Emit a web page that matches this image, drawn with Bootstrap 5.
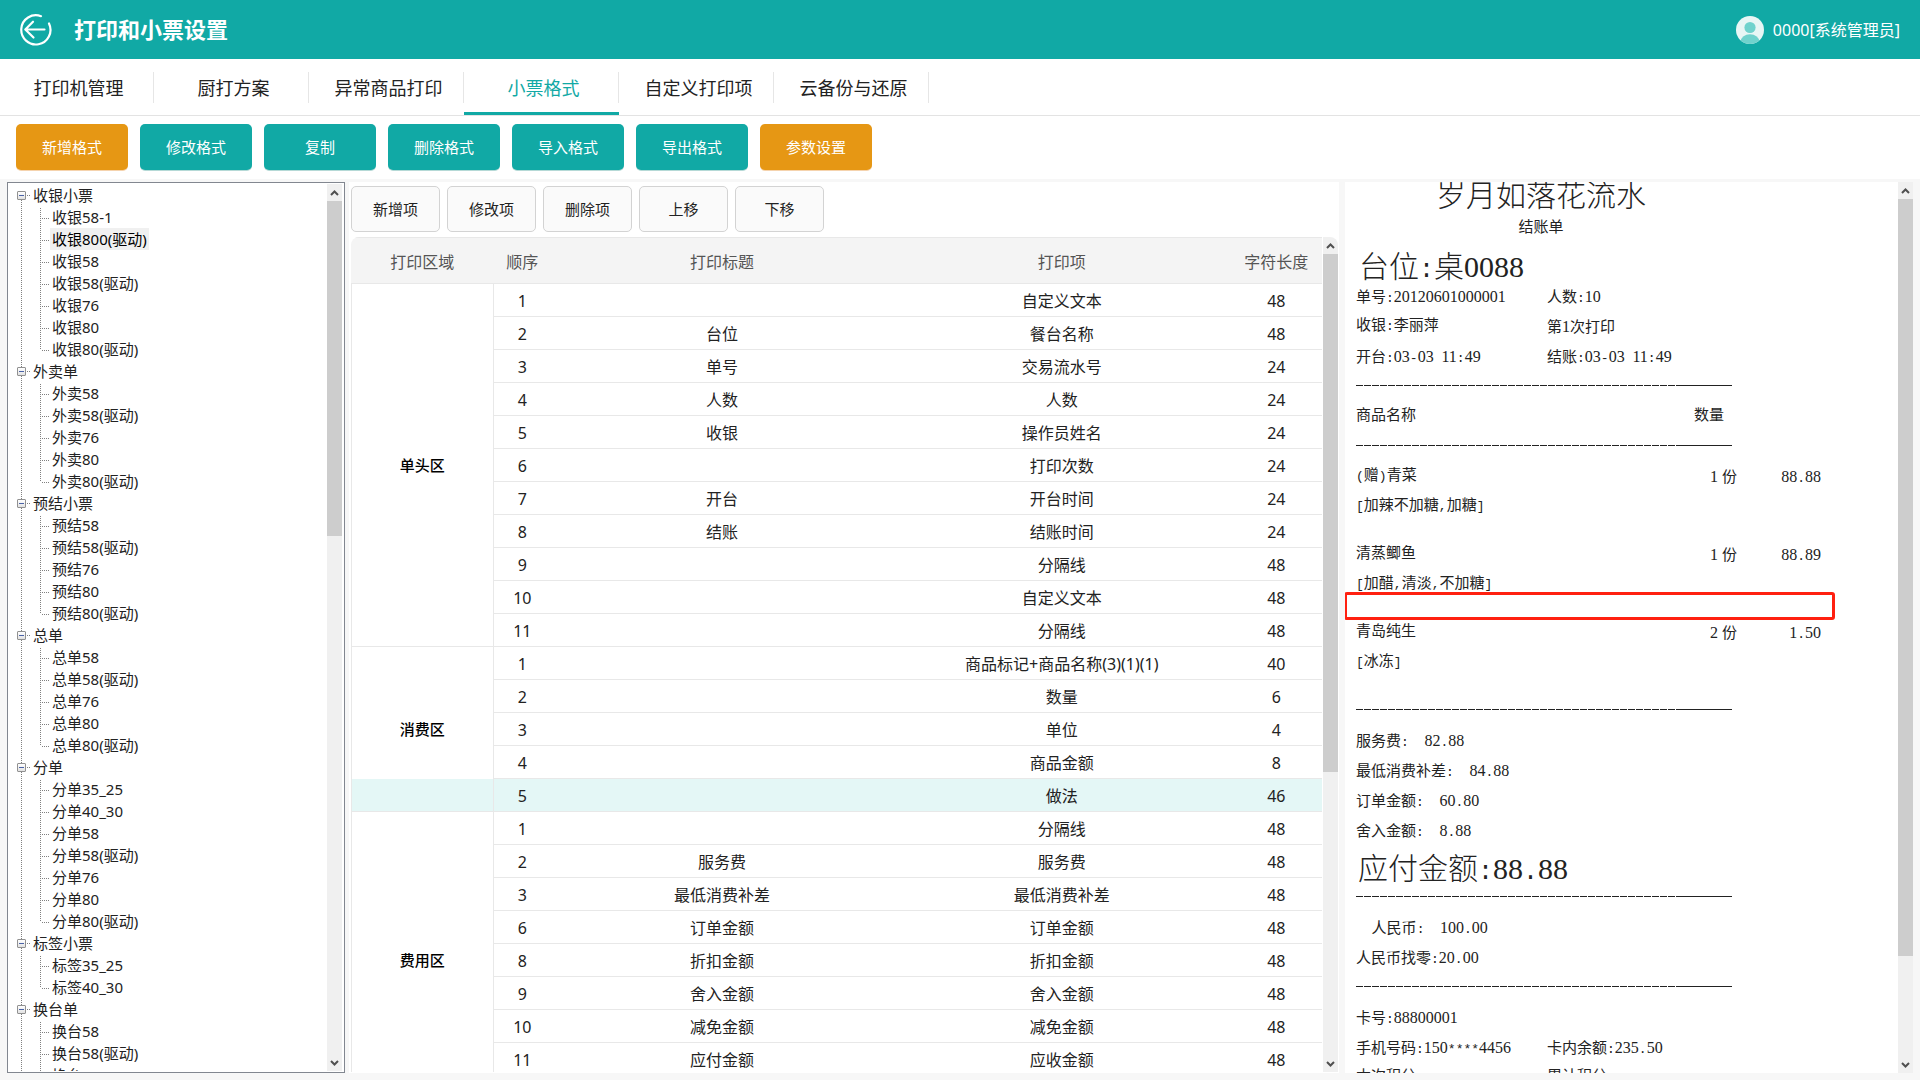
<!DOCTYPE html>
<html lang="zh-CN">
<head>
<meta charset="utf-8">
<meta name="viewport" content="width=device-width, initial-scale=1">
<title>打印和小票设置</title>
<link href="https://cdn.jsdelivr.net/npm/bootstrap@5.3.0/dist/css/bootstrap.min.css" rel="stylesheet">
<style>
  :root { --teal: #11a9a5; --amber: #e69714; --line: #e8e8e8; }
  body { font-family: "Noto Sans", "Noto Sans CJK SC", sans-serif; font-size: 16px; color: #222; background: #f7f7f7; }
  a { color: inherit; text-decoration: none; }

  .topbar { height: 59px; background: var(--teal); padding: 0 20px 0 17px; }
  .topbar h1 { font-size: 22px; font-weight: 700; line-height: 32px; margin-left: 21px; }
  .title-group { padding-bottom: 2px; }
  .back-btn { width: 36px; height: 36px; }
  .user-link { gap: 9px; }

  .tabs-bar { height: 57px; border-bottom: 1px solid #e3e3e3; margin-left: -1px; }
  .tabs-bar .nav-link { width: 155px; height: 56px; padding: 0; font-size: 18px; color: #222; border-radius: 0; border-bottom: 3px solid transparent; border-top: 3px solid transparent; }
  .tabs-bar .nav-link span { height: 31px; line-height: 32px; padding-left: 5px; border-right: 1px solid #e6e6e6; }
  .tabs-bar .nav-link.active { color: var(--teal); border-bottom-color: var(--teal); }

  .actions { padding: 8px 16px; gap: 12px; height: 63px; }
  .btn-action { width: 112px; height: 46px; padding: 0; border: 0; border-radius: 5px; font-size: 15px; color: #fff; background: var(--teal); box-shadow: 0 1px 0 #b5d9d6; }
  .btn-action:hover { background: #0e9793; color: #fff; }
  .btn-action.amber { background: var(--amber); box-shadow: 0 1px 0 #f5d3ae; }
  .btn-action.amber:hover { background: #cf8610; }

  .workspace { padding: 3px 7px 7px; }

  .scroll-rail { width: 15px; background: #f0f0f0; }
  .scroll-rail svg { height: 17px; width: 100%; }
  .scroll-thumb { background: #cdcdcd; }

  .tree-panel { width: 338px; border: 1px solid #828790; padding: 1px 2px 1px 0; margin-right: 4px; font-size: 15px; }
  .tree-panel ul { list-style: none; margin: 0; padding: 0; }
  .tree-panel li { line-height: 22px; }
  .branch { background: repeating-linear-gradient(#808080 0 1px, #fff 1px 2px) 13px 0 / 1px 100% no-repeat; }
  .branch:first-child { background-position: 13px 12px; }
  .branch-head { height: 22px; padding-left: 9px; }
  .twig { width: 9px; height: 9px; padding: 0; border: 1px solid #919191; border-radius: 1px; background: linear-gradient(#4b63a7, #4b63a7) center / 5px 1px no-repeat, linear-gradient(#fff, #e2e2e2); }
  .stub { width: 4px; height: 1px; margin: 0 2px 0 1px; background: repeating-linear-gradient(90deg, #808080 0 1px, transparent 1px 2px); }
  .tree-panel .leaves { background: repeating-linear-gradient(#808080 0 1px, #fff 1px 2px) 32px 2px / 1px calc(100% - 13px) no-repeat; }
  .leaves li { height: 22px; padding-left: 42px; background: repeating-linear-gradient(90deg, #808080 0 1px, transparent 1px 2px) 34px 12px / 7px 1px no-repeat; }
  .leaves a { display: inline-block; height: 22px; padding: 0 2px; }
  .leaves a.picked { background: #f0f0f0; color: #000; }

  .format-panel { flex: 987 1 3px; margin-right: 6px; padding: 4px 1px 1px 2px; min-width: 0; }
  .item-tools { gap: 7px; margin-bottom: 5px; }
  .btn-item { width: 89px; height: 46px; padding: 0; font-size: 15px; color: #222; background: #fafafa; border: 1px solid #d3d3d3; border-radius: 5px; }
  .btn-item:hover { background: #f0f0f0; }
  .grid-wrap { border-radius: 8px 8px 0 0; }
  .grid-body { padding-right: 1px; }
  .fmt-table { table-layout: fixed; border-collapse: separate; border-spacing: 0; --bs-table-color: #222; --bs-table-bg: transparent; color: #222; }
  .fmt-table > :not(caption) > * > * { padding: 2px 0 0; height: 33px; line-height: 24px; border-width: 0 0 1px; border-color: var(--line); border-style: solid; }
  .fmt-table > thead > tr > th { height: 47px; vertical-align: middle; font-weight: 400; color: #555; background: #f4f4f4; border-top-width: 1px; }
  .fmt-table > tbody > tr > .zone { padding-top: 0; font-size: 15px; font-weight: 500; color: #000; border-width: 0 1px 1px; }
  .fmt-table > tbody > tr > .zone.lit { background: linear-gradient(to top, #e4f7f6 32px, transparent 32px); }
  .fmt-table > tbody > tr.current > td:not(.zone) { background: #e4f7f6; }

  .receipt-panel { flex: 568 1 0; min-width: 0; }
  .receipt { padding-left: 11px; font-family: "Liberation Mono", "Noto Sans CJK SC", monospace; font-size: 15px; color: #222; }
  .receipt .rline { height: 30px; line-height: 32px; white-space: pre; }
  .receipt .hw { font-size: 13px; }
  .receipt .hw i { font-family: "Liberation Serif", serif; font-style: normal; font-size: 16px; }
  .receipt .half { width: 191px; }
  .receipt .qty { width: 381px; }
  .receipt .qtyhead { width: 368px; }
  .receipt .amt { width: 84px; text-align: right; }
  .receipt .big { font-size: 30px; height: 37px; font-weight: 300; white-space: pre; }
  .receipt .big .hw { font-size: 25px; }
  .receipt .big .hw i { font-size: 30px; }
  .receipt .shop { width: 370px; height: 33px; line-height: 33px; }
  .receipt .bill { width: 370px; height: 26px; line-height: 28px; }
  .receipt .seat { height: 40px; padding-left: 3px; line-height: 52px; }
  .receipt .total { line-height: 47px; padding-left: 2px; }
  .rule { height: 30px; width: 376px; margin: 0; opacity: 1; border: 0;
    background: linear-gradient(#222, #222) 100% 14px / 56px 1px no-repeat, repeating-linear-gradient(90deg, #222 0 7px, transparent 7px 8px) 0 14px / 320px 1px no-repeat; }
  .gap-line { height: 18px; }
  .callout { position: absolute; left: -12px; top: -7px; width: 491px; height: 28px; border: 3px solid #ff2010; border-radius: 3px; }
</style>
</head>
<body class="vh-100 d-flex flex-column overflow-hidden">

<header class="topbar d-flex align-items-center justify-content-between text-white flex-shrink-0">
  <div class="title-group d-flex align-items-center">
    <button type="button" class="back-btn btn p-0 border-0 d-flex" aria-label="返回">
      <svg width="36" height="36" viewBox="0 0 36 36" fill="none" stroke="#fff" stroke-width="2.2" stroke-linecap="round" stroke-linejoin="round">
        <path d="M24 5.200A14.600 14.600 0 1 0 32 12.500"/>
        <path d="M27.500 18.500H8.500M16 10.700l-7.700 7.800 8.200 8"/>
      </svg>
    </button>
    <h1 class="mb-0">打印和小票设置</h1>
  </div>
  <a href="#" class="user-link d-flex align-items-center">
    <svg width="28" height="28" viewBox="0 0 28 28" aria-hidden="true">
      <defs><clipPath id="face"><circle cx="14" cy="14" r="14"/></clipPath></defs>
      <circle cx="14" cy="14" r="14" fill="#e8f6f5"/>
      <g clip-path="url(#face)" fill="#70d2cd"><circle cx="14" cy="11.500" r="5.600"/><ellipse cx="14" cy="26" rx="9.500" ry="7.700"/></g>
    </svg>
    <span>0000[系统管理员]</span>
  </a>
</header>

<nav class="tabs-bar nav bg-white flex-shrink-0">
  <a class="nav-link d-flex flex-column justify-content-center text-center" href="#"><span>打印机管理</span></a>
  <a class="nav-link d-flex flex-column justify-content-center text-center" href="#"><span>厨打方案</span></a>
  <a class="nav-link d-flex flex-column justify-content-center text-center" href="#"><span>异常商品打印</span></a>
  <a class="nav-link d-flex flex-column justify-content-center text-center active" href="#" aria-current="page"><span>小票格式</span></a>
  <a class="nav-link d-flex flex-column justify-content-center text-center" href="#"><span>自定义打印项</span></a>
  <a class="nav-link d-flex flex-column justify-content-center text-center" href="#"><span>云备份与还原</span></a>
</nav>

<div class="actions d-flex bg-white flex-shrink-0">
  <button type="button" class="btn btn-action amber">新增格式</button>
  <button type="button" class="btn btn-action">修改格式</button>
  <button type="button" class="btn btn-action">复制</button>
  <button type="button" class="btn btn-action">删除格式</button>
  <button type="button" class="btn btn-action">导入格式</button>
  <button type="button" class="btn btn-action">导出格式</button>
  <button type="button" class="btn btn-action amber">参数设置</button>
</div>

<main class="workspace d-flex flex-grow-1 overflow-hidden">

  <aside class="tree-panel d-flex bg-white flex-shrink-0">
    <ul class="flex-grow-1 overflow-hidden">
      <li class="branch">
        <div class="branch-head d-flex align-items-center"><button type="button" class="twig" aria-label="折叠"></button><i class="stub"></i><span>收银小票</span></div>
        <ul class="leaves">
          <li><a href="#">收银58-1</a></li>
          <li><a href="#" class="picked">收银800(驱动)</a></li>
          <li><a href="#">收银58</a></li>
          <li><a href="#">收银58(驱动)</a></li>
          <li><a href="#">收银76</a></li>
          <li><a href="#">收银80</a></li>
          <li><a href="#">收银80(驱动)</a></li>
        </ul>
      </li>
      <li class="branch">
        <div class="branch-head d-flex align-items-center"><button type="button" class="twig" aria-label="折叠"></button><i class="stub"></i><span>外卖单</span></div>
        <ul class="leaves">
          <li><a href="#">外卖58</a></li>
          <li><a href="#">外卖58(驱动)</a></li>
          <li><a href="#">外卖76</a></li>
          <li><a href="#">外卖80</a></li>
          <li><a href="#">外卖80(驱动)</a></li>
        </ul>
      </li>
      <li class="branch">
        <div class="branch-head d-flex align-items-center"><button type="button" class="twig" aria-label="折叠"></button><i class="stub"></i><span>预结小票</span></div>
        <ul class="leaves">
          <li><a href="#">预结58</a></li>
          <li><a href="#">预结58(驱动)</a></li>
          <li><a href="#">预结76</a></li>
          <li><a href="#">预结80</a></li>
          <li><a href="#">预结80(驱动)</a></li>
        </ul>
      </li>
      <li class="branch">
        <div class="branch-head d-flex align-items-center"><button type="button" class="twig" aria-label="折叠"></button><i class="stub"></i><span>总单</span></div>
        <ul class="leaves">
          <li><a href="#">总单58</a></li>
          <li><a href="#">总单58(驱动)</a></li>
          <li><a href="#">总单76</a></li>
          <li><a href="#">总单80</a></li>
          <li><a href="#">总单80(驱动)</a></li>
        </ul>
      </li>
      <li class="branch">
        <div class="branch-head d-flex align-items-center"><button type="button" class="twig" aria-label="折叠"></button><i class="stub"></i><span>分单</span></div>
        <ul class="leaves">
          <li><a href="#">分单35_25</a></li>
          <li><a href="#">分单40_30</a></li>
          <li><a href="#">分单58</a></li>
          <li><a href="#">分单58(驱动)</a></li>
          <li><a href="#">分单76</a></li>
          <li><a href="#">分单80</a></li>
          <li><a href="#">分单80(驱动)</a></li>
        </ul>
      </li>
      <li class="branch">
        <div class="branch-head d-flex align-items-center"><button type="button" class="twig" aria-label="折叠"></button><i class="stub"></i><span>标签小票</span></div>
        <ul class="leaves">
          <li><a href="#">标签35_25</a></li>
          <li><a href="#">标签40_30</a></li>
        </ul>
      </li>
      <li class="branch">
        <div class="branch-head d-flex align-items-center"><button type="button" class="twig" aria-label="折叠"></button><i class="stub"></i><span>换台单</span></div>
        <ul class="leaves">
          <li><a href="#">换台58</a></li>
          <li><a href="#">换台58(驱动)</a></li>
          <li><a href="#">换台76</a></li>
        </ul>
      </li>
    </ul>
    <div class="scroll-rail d-flex flex-column flex-shrink-0" aria-hidden="true">
      <svg viewBox="0 0 15 17" fill="none" stroke="#505050" stroke-width="2"><path d="M4 11l3.500-3.500L11 11"/></svg>
      <div class="flex-grow-1"><div class="scroll-thumb" style="height:39.3%"></div></div>
      <svg viewBox="0 0 15 17" fill="none" stroke="#505050" stroke-width="2"><path d="M4 7l3.500 3.500L11 7"/></svg>
    </div>
  </aside>

  <section class="format-panel bg-white d-flex flex-column">
    <div class="item-tools d-flex flex-shrink-0">
      <button type="button" class="btn btn-item">新增项</button>
      <button type="button" class="btn btn-item">修改项</button>
      <button type="button" class="btn btn-item">删除项</button>
      <button type="button" class="btn btn-item">上移</button>
      <button type="button" class="btn btn-item">下移</button>
    </div>
    <div class="grid-wrap d-flex flex-grow-1 overflow-hidden">
      <div class="grid-body flex-grow-1 overflow-hidden">
        <table class="table fmt-table mb-0 text-center align-middle">
          <colgroup><col style="width:14.7%"><col style="width:5.9%"><col style="width:35.2%"><col style="width:34.8%"><col style="width:9.4%"></colgroup>
          <thead>
            <tr><th scope="col">打印区域</th><th scope="col">顺序</th><th scope="col">打印标题</th><th scope="col">打印项</th><th scope="col">字符长度</th></tr>
          </thead>
          <tbody>
            <tr><td class="zone" rowspan="11">单头区</td><td>1</td><td></td><td>自定义文本</td><td>48</td></tr>
            <tr><td>2</td><td>台位</td><td>餐台名称</td><td>48</td></tr>
            <tr><td>3</td><td>单号</td><td>交易流水号</td><td>24</td></tr>
            <tr><td>4</td><td>人数</td><td>人数</td><td>24</td></tr>
            <tr><td>5</td><td>收银</td><td>操作员姓名</td><td>24</td></tr>
            <tr><td>6</td><td></td><td>打印次数</td><td>24</td></tr>
            <tr><td>7</td><td>开台</td><td>开台时间</td><td>24</td></tr>
            <tr><td>8</td><td>结账</td><td>结账时间</td><td>24</td></tr>
            <tr><td>9</td><td></td><td>分隔线</td><td>48</td></tr>
            <tr><td>10</td><td></td><td>自定义文本</td><td>48</td></tr>
            <tr><td>11</td><td></td><td>分隔线</td><td>48</td></tr>
            <tr><td class="zone lit" rowspan="5">消费区</td><td>1</td><td></td><td>商品标记+商品名称(3)(1)(1)</td><td>40</td></tr>
            <tr><td>2</td><td></td><td>数量</td><td>6</td></tr>
            <tr><td>3</td><td></td><td>单位</td><td>4</td></tr>
            <tr><td>4</td><td></td><td>商品金额</td><td>8</td></tr>
            <tr class="current"><td>5</td><td></td><td>做法</td><td>46</td></tr>
            <tr><td class="zone" rowspan="9">费用区</td><td>1</td><td></td><td>分隔线</td><td>48</td></tr>
            <tr><td>2</td><td>服务费</td><td>服务费</td><td>48</td></tr>
            <tr><td>3</td><td>最低消费补差</td><td>最低消费补差</td><td>48</td></tr>
            <tr><td>6</td><td>订单金额</td><td>订单金额</td><td>48</td></tr>
            <tr><td>8</td><td>折扣金额</td><td>折扣金额</td><td>48</td></tr>
            <tr><td>9</td><td>舍入金额</td><td>舍入金额</td><td>48</td></tr>
            <tr><td>10</td><td>减免金额</td><td>减免金额</td><td>48</td></tr>
            <tr><td>11</td><td>应付金额</td><td>应收金额</td><td>48</td></tr>
            <tr><td></td><td></td><td></td><td></td></tr>
          </tbody>
        </table>
      </div>
      <div class="scroll-rail d-flex flex-column flex-shrink-0" aria-hidden="true">
        <svg viewBox="0 0 15 17" fill="none" stroke="#505050" stroke-width="2"><path d="M4 11l3.500-3.500L11 11"/></svg>
        <div class="flex-grow-1"><div class="scroll-thumb" style="height:64.7%"></div></div>
        <svg viewBox="0 0 15 17" fill="none" stroke="#505050" stroke-width="2"><path d="M4 7l3.500 3.500L11 7"/></svg>
      </div>
    </div>
  </section>

  <section class="receipt-panel bg-white d-flex">
    <div class="receipt flex-grow-1 overflow-hidden">
      <div class="big shop text-center">岁月如落花流水</div>
      <div class="bill text-center">结账单</div>
      <div class="big seat">台位<span class="hw">:</span>桌<span class="hw"><i>0088</i></span></div>
      <div class="rline d-flex"><span class="half">单号<span class="hw">:<i>20120601000001</i></span></span><span>人数<span class="hw">:<i>10</i></span></span></div>
      <div class="rline d-flex"><span class="half">收银<span class="hw">:</span>李丽萍</span><span>第<span class="hw"><i>1</i></span>次打印</span></div>
      <div class="rline d-flex"><span class="half">开台<span class="hw">:<i>03</i>-<i>03</i> <i>11</i>:<i>49</i></span></span><span>结账<span class="hw">:<i>03</i>-<i>03</i> <i>11</i>:<i>49</i></span></span></div>
      <hr class="rule">
      <div class="rline d-flex"><span class="qtyhead d-flex justify-content-between"><span>商品名称</span><span>数量</span></span></div>
      <hr class="rule">
      <div class="rline d-flex"><span class="qty d-flex justify-content-between"><span><span class="hw">(</span>赠<span class="hw">)</span>青菜</span><span><span class="hw"><i>1 </i></span>份</span></span><span class="amt hw"><i>88</i>.<i>88</i></span></div>
      <div class="rline"><span class="hw">[</span>加辣不加糖<span class="hw">,</span>加糖<span class="hw">]</span></div>
      <div class="gap-line"></div>
      <div class="rline d-flex"><span class="qty d-flex justify-content-between"><span>清蒸鲫鱼</span><span><span class="hw"><i>1 </i></span>份</span></span><span class="amt hw"><i>88</i>.<i>89</i></span></div>
      <div class="rline"><span class="hw">[</span>加醋<span class="hw">,</span>清淡<span class="hw">,</span>不加糖<span class="hw">]</span></div>
      <div class="gap-line position-relative"><div class="callout"></div></div>
      <div class="rline d-flex"><span class="qty d-flex justify-content-between"><span>青岛纯生</span><span><span class="hw"><i>2 </i></span>份</span></span><span class="amt hw"><i>1</i>.<i>50</i></span></div>
      <div class="rline"><span class="hw">[</span>冰冻<span class="hw">]</span></div>
      <div class="gap-line"></div>
      <hr class="rule">
      <div class="rline">服务费<span class="hw">:  <i>82</i>.<i>88</i></span></div>
      <div class="rline">最低消费补差<span class="hw">:  <i>84</i>.<i>88</i></span></div>
      <div class="rline">订单金额<span class="hw">:  <i>60</i>.<i>80</i></span></div>
      <div class="rline">舍入金额<span class="hw">:  <i>8</i>.<i>88</i></span></div>
      <div class="big total">应付金额<span class="hw">:<i>88</i>.<i>88</i></span></div>
      <hr class="rule">
      <div class="rline"><span class="hw">  </span>人民币<span class="hw">:  <i>100</i>.<i>00</i></span></div>
      <div class="rline">人民币找零<span class="hw">:<i>20</i>.<i>00</i></span></div>
      <hr class="rule">
      <div class="rline">卡号<span class="hw">:<i>88800001</i></span></div>
      <div class="rline d-flex"><span class="half">手机号码<span class="hw">:<i>150</i>****<i>4456</i></span></span><span>卡内余额<span class="hw">:<i>235</i>.<i>50</i></span></span></div>
      <div class="rline d-flex"><span class="half">本次积分</span><span>累计积分</span></div>
    </div>
    <div class="scroll-rail d-flex flex-column flex-shrink-0" aria-hidden="true">
      <svg viewBox="0 0 15 17" fill="none" stroke="#505050" stroke-width="2"><path d="M4 11l3.500-3.500L11 11"/></svg>
      <div class="flex-grow-1"><div class="scroll-thumb" style="height:88.3%"></div></div>
      <svg viewBox="0 0 15 17" fill="none" stroke="#505050" stroke-width="2"><path d="M4 7l3.500 3.500L11 7"/></svg>
    </div>
  </section>
</main>

<script src="https://cdn.jsdelivr.net/npm/bootstrap@5.3.0/dist/js/bootstrap.bundle.min.js"></script>
</body>
</html>
